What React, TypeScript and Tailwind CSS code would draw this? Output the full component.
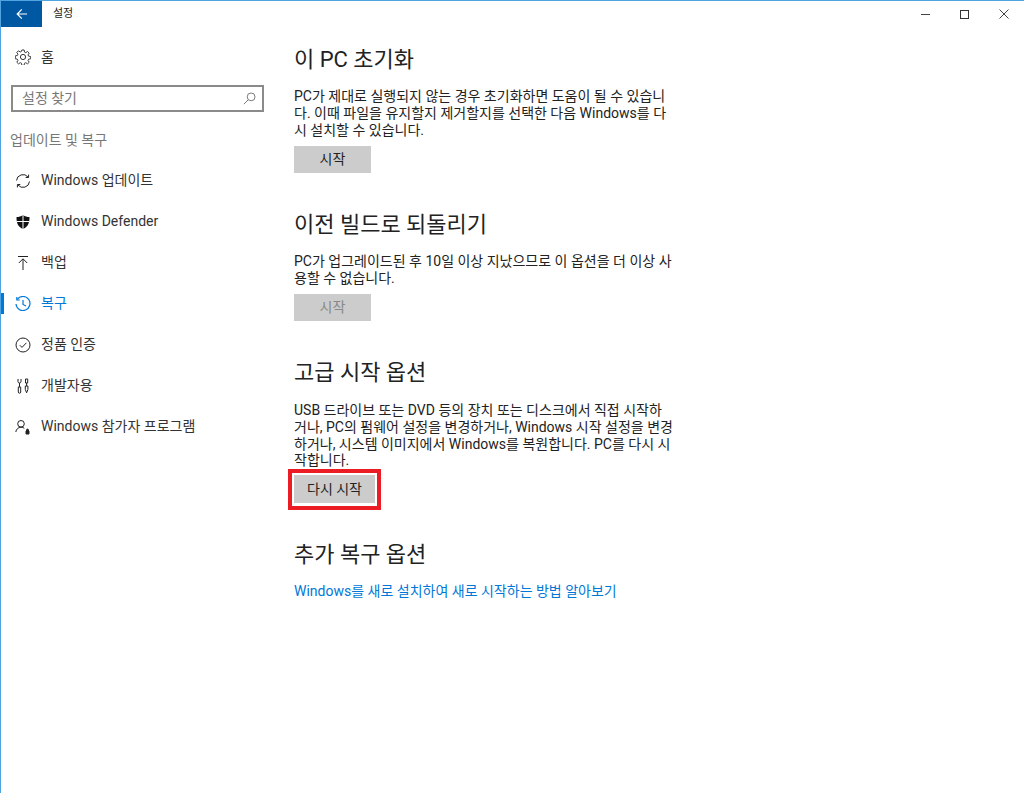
import React from "react";

const F = "font-['Roboto','Noto_Sans_CJK_KR',sans-serif]";

const I = ({ children }: { children: React.ReactNode }) => (
  <svg viewBox="0 0 16 16" className="w-4 h-4 shrink-0" fill="none" stroke="currentColor" strokeWidth="1">{children}</svg>
);

const Gear = () => (
  <I>
    <circle cx="8" cy="8" r="2.6" />
    <path d="M6.8 .6h2.400l.4 2.200 1.300.6 1.900-1.200 1.700 1.700-1.200 1.900.6 1.300 2.200.4v2.400l-2.200.4-.6 1.300 1.200 1.900-1.700 1.700-1.900-1.200-1.300.6-.4 2.200H6.800l-.4-2.200-1.300-.6-1.900 1.200-1.700-1.700 1.200-1.900-.6-1.300-2.200-.4V6.800l2.200-.4.6-1.300-1.200-1.900 1.700-1.700 1.900 1.200 1.300-.6z" transform="translate(.4 .4) scale(.95)" />
  </I>
);
const Sync = () => (
  <I>
    <path d="M1.5 7.5A6.5 6.5 0 0 1 13 4M14.5 8.5A6.5 6.5 0 0 1 3 12" />
    <path d="M13.6 1.6V4.5H10.7M2.4 14.4V11.5H5.3" />
  </I>
);
const Shield = () => (
  <svg viewBox="0 0 16 16" className="w-4 h-4 shrink-0">
    <path d="M8 1C6 2.4 4 3 1.5 3c0 5 .8 9.500 6.500 12 5.700-2.500 6.500-7 6.500-12C12 3 10 2.400 8 1z" fill="#111" />
    <path d="M8 1v14M1.500 7.500h13" stroke="#fff" strokeWidth="1" />
  </svg>
);
const Backup = () => (
  <I>
    <path d="M3 1.500h10M8 15V4M3.800 8 8 3.800 12.200 8" />
  </I>
);
const History = () => (
  <svg viewBox="0 0 16 16" className="w-4 h-4 shrink-0" fill="none" stroke="#0078d7" strokeWidth="1.200">
    <path d="M2.200 3.500A7 7 0 1 1 1 8" />
    <path d="M1.800 1v3h3M8 4v4.500l3 1.500" />
  </svg>
);
const Check = () => (
  <I>
    <circle cx="8" cy="8" r="7" />
    <path d="M4.800 8.200 7 10.400l4.400-4.600" />
  </I>
);
const Tools = () => (
  <I>
    <path d="M3 1v2.500a1.500 1.500 0 0 0 3 0V1M4.500 5v4M3.300 9h2.400v5a1.200 1.200 0 0 1-2.400 0zM10.500 1h2.200v4h-2.200zM11.600 5v3M10.300 8h2.600v3.500l-1.300 3.300-1.300-3.300z" />
  </I>
);
const Insider = () => (
  <I>
    <circle cx="6" cy="4.800" r="3.300" />
    <path d="M.8 13c.4-2.800 2.500-4.800 5.200-4.800 1.300 0 2.400.4 3.300 1.100" />
    <path d="M11 12h3v3h-3zM11.600 12v-1a.9.9 0 0 1 1.800 0v1" fill="currentColor" />
  </I>
);

const items: { icon: React.ReactNode; label: string; active?: boolean }[] = [
  { icon: <Sync />, label: "Windows 업데이트" },
  { icon: <Shield />, label: "Windows Defender" },
  { icon: <Backup />, label: "백업" },
  { icon: <History />, label: "복구", active: true },
  { icon: <Check />, label: "정품 인증" },
  { icon: <Tools />, label: "개발자용" },
  { icon: <Insider />, label: "Windows 참가자 프로그램" },
];

const Nav = ({ icon, label, active }: { icon: React.ReactNode; label: string; active?: boolean }) => (
  <div className={`relative h-[41px] flex items-center pl-[14px] gap-[10px] text-[14px] ${active ? "text-[#0078d7]" : "text-[#333]"}`}>
    {active && <span className="absolute left-0 top-[10px] w-[3px] h-[21px] bg-[#0078d7]" />}
    <span className="w-4 flex text-[#222]">{icon}</span>
    <span>{label}</span>
  </div>
);

const Heading = ({ children }: { children: React.ReactNode }) => (
  <h2 className="text-[22px] leading-[28px] text-[#222] font-normal whitespace-nowrap">{children}</h2>
);

const Body = ({ children }: { children: React.ReactNode }) => (
  <p className="text-[14px] leading-[16.8px] text-[#222] whitespace-nowrap">{children}</p>
);

export default function App() {
  return (
    <div className={`${F} w-[1024px] h-[793px] bg-white border-t border-l border-[#4fa3e0] overflow-hidden flex flex-col`}>
      <header className="h-[26px] flex items-center shrink-0">
        <div className="w-[41px] h-[26px] bg-[#0058a3] flex items-center justify-center text-white">
          <svg viewBox="0 0 12 12" className="w-3 h-3" fill="none" stroke="currentColor" strokeWidth="1.200">
            <path d="M11 6H1.200M5.800 1.400 1.200 6l4.600 4.600" />
          </svg>
        </div>
        <span className="ml-[11px] text-[11px] text-[#222]">설정</span>
        <div className="ml-auto flex items-center text-[#444] pr-[1px]">
          <span className="w-[39px] flex justify-center"><span className="w-[9px] h-[1px] bg-[#444]" /></span>
          <span className="w-[39px] flex justify-center"><span className="w-[9px] h-[9px] border border-[#333]" /></span>
          <span className="w-[39px] flex justify-center">
            <svg viewBox="0 0 10 10" className="w-[10px] h-[10px]" stroke="currentColor" strokeWidth="1"><path d="M.5.500l9 9M9.500.500l-9 9" /></svg>
          </span>
        </div>
      </header>
      <div className="flex flex-1 min-h-0">
        <aside className="w-[293px] shrink-0 flex flex-col">
          <div className="mt-[16px] h-[28px] flex items-center pl-[14px] gap-[10px] text-[14px] text-[#333]">
            <Gear />
            <span>홈</span>
          </div>
          <div className="mt-[14px] ml-[10px] w-[253px] h-[27px] border-2 border-[#8a8a8a] flex items-center justify-between pl-[9px] pr-[6px] text-[14px] text-[#777]">
            <span>설정 찾기</span>
            <svg viewBox="0 0 16 16" className="w-[13px] h-[13px]" fill="none" stroke="#777" strokeWidth="1.200">
              <circle cx="10" cy="6" r="4.800" />
              <path d="M6.500 9.500 1 15" />
            </svg>
          </div>
          <div className="mt-[18px] ml-[9px] text-[14px] leading-[20px] text-[#777]">업데이트 및 복구</div>
          <nav className="mt-[10px] flex flex-col">
            {items.map((i) => (
              <Nav key={i.label} {...i} />
            ))}
          </nav>
        </aside>
        <main className="w-[386px] pt-[19px] flex flex-col items-start">
          <Heading>이 PC 초기화</Heading>
          <div className="mt-[14px]">
            <Body>PC가 제대로 실행되지 않는 경우 초기화하면 도움이 될 수 있습니<br />다. 이때 파일을 유지할지 제거할지를 선택한 다음 Windows를 다<br />시 설치할 수 있습니다.</Body>
          </div>
          <button className="mt-[8px] w-[77px] h-[27px] bg-[#cccccc] text-[14px] text-[#222]">시작</button>
          <div className="mt-[38px]"><Heading>이전 빌드로 되돌리기</Heading></div>
          <div className="mt-[14px]">
            <Body>PC가 업그레이드된 후 10일 이상 지났으므로 이 옵션을 더 이상 사<br />용할 수 없습니다.</Body>
          </div>
          <button className="mt-[7px] w-[77px] h-[27px] bg-[#cccccc] text-[14px] text-[#888]">시작</button>
          <div className="mt-[38px]"><Heading>고급 시작 옵션</Heading></div>
          <div className="mt-[15px]">
            <Body>USB 드라이브 또는 DVD 등의 장치 또는 디스크에서 직접 시작하<br />거나, PC의 펌웨어 설정을 변경하거나, Windows 시작 설정을 변경<br />하거나, 시스템 이미지에서 Windows를 복원합니다. PC를 다시 시<br />작합니다.</Body>
          </div>
          <div className="-ml-[6px] w-[93px] h-[41px] border-[4px] border-[#ec1c24] pt-[2px] pb-[3px] px-[2px] flex">
            <button className="flex-1 bg-[#cccccc] text-[14px] text-[#222]">다시 시작</button>
          </div>
          <div className="mt-[31px]"><Heading>추가 복구 옵션</Heading></div>
          <a className="mt-[12px] text-[14px] leading-[20px] text-[#0078d7]">Windows를 새로 설치하여 새로 시작하는 방법 알아보기</a>
        </main>
      </div>
    </div>
  );
}
